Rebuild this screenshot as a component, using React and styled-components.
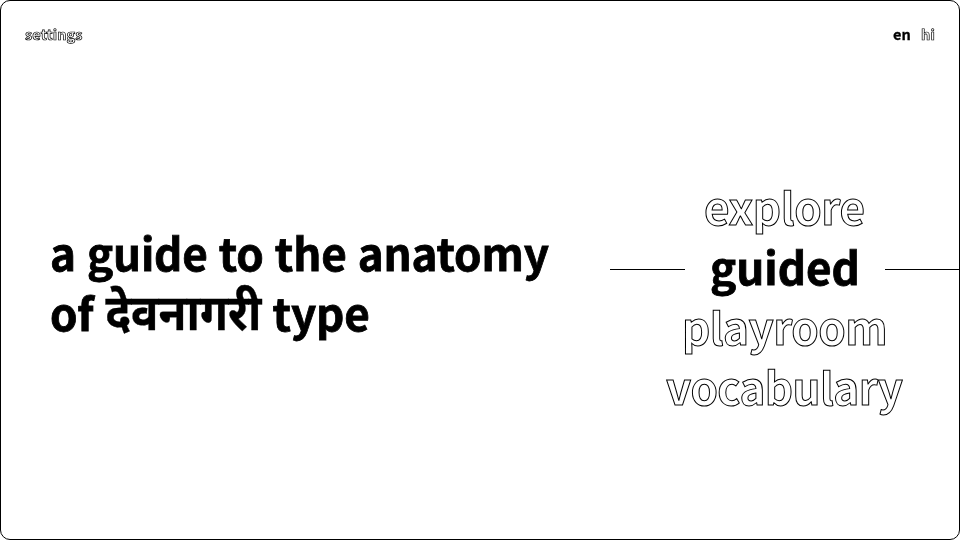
import React from "react";
import styled, { createGlobalStyle } from "styled-components";

const Global = createGlobalStyle`
  * { box-sizing: border-box; }
  body { margin: 0; background: #fff; color: #000; }
`;

const Frame = styled.main`
  height: 540px;
  width: 960px;
  border: 1px solid #000;
  border-radius: 10px;
  overflow: hidden;
  display: flex;
  flex-direction: column;
  font-family: "Noto Sans CJK SC", "Noto Sans", sans-serif;
  font-weight: 700;
`;

const TopBar = styled.header`
  display: flex;
  justify-content: space-between;
  padding: 23px 24px 0;
  height: 68px;
  font-size: 14.5px;
  line-height: 20px;
`;

const Label = styled.span`
  display: inline-block;
  will-change: transform;
  color: ${(p) => (p.$active ? "#000" : "#fff")};
  -webkit-text-stroke: ${(p) => (p.$small ? "0.7px #000" : "1px #000")};
  ${(p) => p.$active && "-webkit-text-stroke-width: 0.3px;"}
  letter-spacing: ${(p) => p.$tracking || 0}px;
`;

const Languages = styled.nav`
  display: flex;
  gap: 10px;
`;

const Body = styled.div`
  display: flex;
  justify-content: space-between;
`;

const Title = styled.h1`
  margin: 153px 0 0 49px;
  font-size: 44px;
  line-height: 60px;
  white-space: nowrap;
  will-change: transform;
  word-spacing: 1.3px;
  letter-spacing: -0.17px;
  -webkit-text-stroke: 0.8px #000;
`;

const Devanagari = styled.span`
  display: inline-block;
  font-family: "Noto Sans", sans-serif;
  font-size: 45.5px;
  line-height: 60px;
  height: 60px;
  vertical-align: top;
  letter-spacing: 0;
  margin-left: 1px;
  transform: scaleY(1.09);
  transform-origin: 50% 46px;
  -webkit-text-stroke: 0.3px #000;
`;

const Menu = styled.nav`
  width: 349px;
  margin-top: 107px;
  font-size: 44px;
  line-height: 60px;
`;

const Item = styled.div`
  display: flex;
  justify-content: ${(p) => (p.$ruled ? "space-between" : "center")};
  height: 60px;
`;

const Rule = styled.i`
  width: ${(p) => p.$width}px;
  height: 1px;
  margin-top: 33px;
  background: #000;
`;

const Guided = styled(Label)`
  -webkit-text-stroke-width: 0.8px;
`;

export default function App() {
  return (
    <>
      <Global />
      <Frame>
        <TopBar>
          <Label $small $tracking={0.1}>settings</Label>
          <Languages>
            <Label $active $tracking={0.1}>en</Label>
            <Label $small $tracking={0.1}>hi</Label>
          </Languages>
        </TopBar>
        <Body>
          <Title>a guide to the anatomy<br />of <Devanagari>देवनागरी</Devanagari> type</Title>
          <Menu>
            <Item><Label $tracking={-0.4}>explore</Label></Item>
            <Item $ruled><Rule $width={75} /><Guided $active>guided</Guided><Rule $width={74} /></Item>
            <Item><Label $tracking={-0.55}>playroom</Label></Item>
            <Item><Label $tracking={-0.6}>vocabulary</Label></Item>
          </Menu>
        </Body>
      </Frame>
    </>
  );
}
